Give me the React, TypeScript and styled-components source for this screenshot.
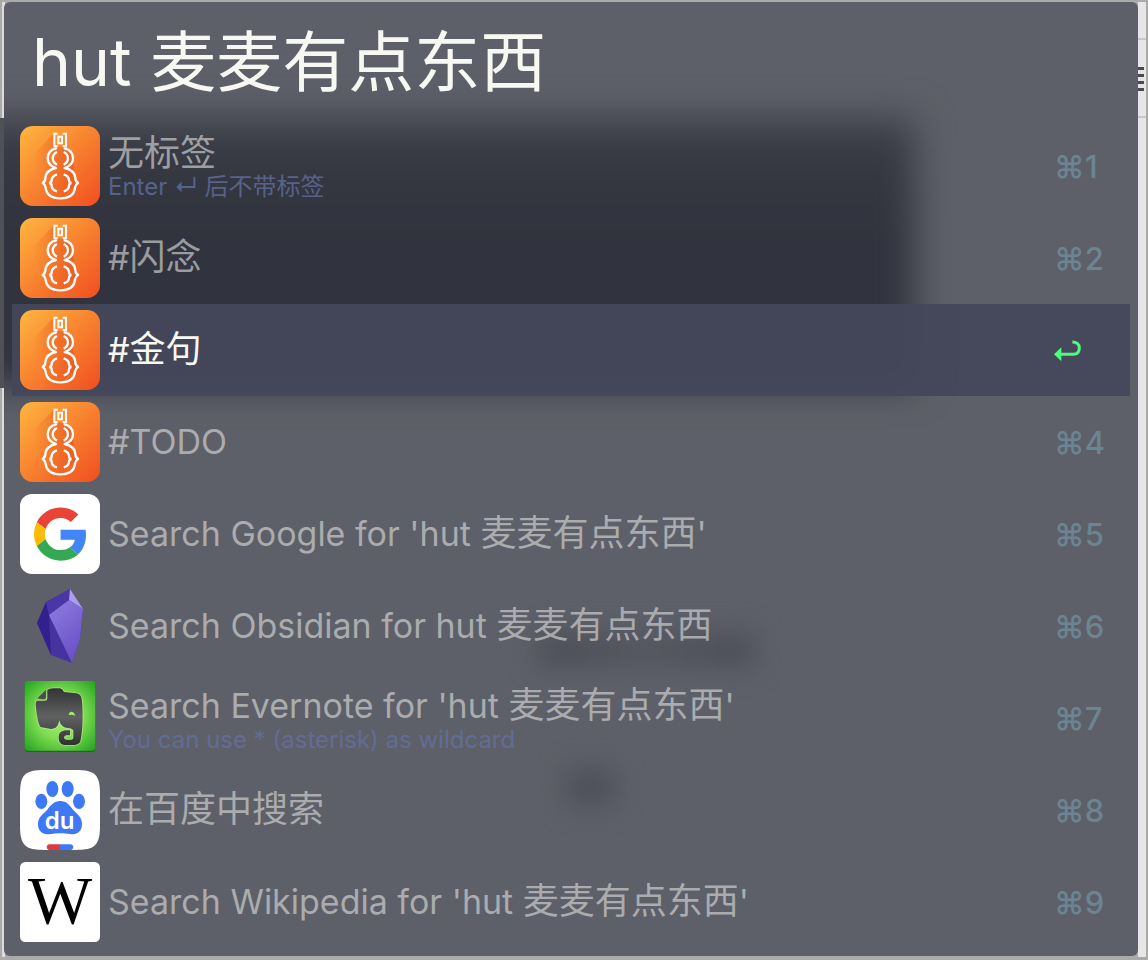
import React, { useId } from 'react';
import styled, { createGlobalStyle } from 'styled-components';

const Global = createGlobalStyle`
  * { box-sizing: border-box; }
  body { margin: 0; background: #a9aaa9; }
`;

const fontStack = `Inter, 'Noto Sans CJK SC', sans-serif`;

const Desktop = styled.main`
  min-height: 100vh;
  padding: 2px 10px 4px 4px;
  font-family: ${fontStack};
  background:
    repeating-linear-gradient(#4a4a4a 0 3px, #e4e4e4 3px 7px) right 4px top 67px / 6px 24px no-repeat,
    linear-gradient(#c8c8c8, #c8c8c8) right 2px top 38px / 8px 2px no-repeat,
    linear-gradient(#c8c8c8, #c8c8c8) right 2px top 116px / 8px 2px no-repeat,
    linear-gradient(#4f5156, #4f5156) left 0 top 118px / 4px 270px no-repeat,
    linear-gradient(#e6e6e6, #e6e6e6) right 2px top 2px / 8px calc(100% - 5px) no-repeat,
    linear-gradient(#dcdcdc, #dcdcdc) left 2px top 2px / 3px calc(100% - 5px) no-repeat,
    #a9aaa9;
`;

const Panel = styled.section`
  position: relative;
  overflow: hidden;
  padding: 0 8px 8px;
  border-radius: 6px;
  background: #5e6069;
`;

const Backdrop = styled.div`
  position: absolute;
  inset: 0;
  pointer-events: none;
`;

const Shade = styled.div<{ $x: number; $y: number; $w: string; $h: number; $blur: number; $color: string }>`
  position: absolute;
  left: ${p => p.$x}px;
  top: ${p => p.$y}px;
  width: ${p => p.$w};
  height: ${p => p.$h}px;
  background: ${p => p.$color};
  filter: blur(${p => p.$blur}px);
`;

const Query = styled.input`
  position: relative;
  display: block;
  width: 100%;
  height: 118px;
  padding: 0 20px 8px;
  border: 0;
  outline: 0;
  background: transparent;
  color: #f8f8f2;
  font-family: ${fontStack};
  font-size: 66px;
`;

const Results = styled.ul`
  position: relative;
  margin: 0;
  padding: 0;
  list-style: none;
`;

const Row = styled.button<{ $active: boolean }>`
  display: flex;
  align-items: center;
  gap: 8px;
  width: 100%;
  height: 92px;
  padding: 0 24px 0 8px;
  border: 0;
  background: ${p => (p.$active ? 'rgba(68, 71, 90, 0.94)' : 'transparent')};
  color: ${p => (p.$active ? '#f8f8f2' : 'rgba(212, 212, 210, 0.66)')};
  font-family: ${fontStack};
  text-align: left;
`;

const Labels = styled.span`
  flex: 1;
  min-width: 0;
  display: flex;
  flex-direction: column;
  padding-bottom: 2px;
`;

const Title = styled.span`
  font-size: 36px;
  line-height: 44px;
  white-space: nowrap;
`;

const Latin = styled.span`
  font-size: 34px;
`;

const Subtitle = styled.span`
  color: rgba(98, 114, 164, 0.75);
  font-size: 24px;
  line-height: 24px;
  white-space: nowrap;
`;

const Shortcut = styled.kbd`
  width: 52px;
  padding-top: 2px;
  color: #6b8592;
  font-family: ${fontStack};
  font-size: 31px;
  font-weight: 500;
  line-height: 40px;
  white-space: nowrap;
`;

const Icon = styled.svg`
  display: block;
  flex: none;
  width: 80px;
  height: 80px;
`;

const ReturnArrow = styled.svg`
  display: block;
  width: 28px;
  height: 22px;
`;

function Gourd() {
  const id = useId();
  return (
    <Icon viewBox="30 30 240 240" aria-hidden="true">
      <defs>
        <linearGradient id={id} x1="0" y1="0" x2="1" y2="1">
          <stop offset="0" stopColor="#ffb640" />
          <stop offset="0.5" stopColor="#f8812f" />
          <stop offset="1" stopColor="#f04e20" />
        </linearGradient>
        <linearGradient id={id + 's'} x1="1" y1="0" x2="0" y2="0.5">
          <stop offset="0" stopColor="#d9481f" stopOpacity="0.7" />
          <stop offset="1" stopColor="#e8551f" stopOpacity="0" />
        </linearGradient>
      </defs>
      <rect x="30" y="30" width="240" height="240" rx="38" fill={`url(#${id})`} />
      <path d="M132 52L75 110V270H130L200 205L185 120L167 92H132Z" fill={`url(#${id}s)`} />
      <g fill="none" stroke="#fff" strokeWidth="7">
        <path d="M143 53H133V91H143M158 53H168V91H158M145 62H156V82H145Z" strokeWidth="6" />
        <path strokeLinecap="round" strokeLinejoin="round" d="M138 97C122 101 113 113 113 127C113 141 122 151 138 156C120 160 107 171 106 186C106 195 103 198 98 201C103 204 106 207 107 215C109 236 125 247 151 247C177 247 193 236 195 215C196 207 199 204 204 201C199 198 196 195 196 186C195 171 182 160 164 156C180 151 189 141 189 127C189 113 180 101 164 97" />
        <path d="M141 108C124 116 124 138 141 146M161 108C178 116 178 138 161 146" />
        <path d="M141 175C128 179 125 187 125 193C125 198 123 200 118 201C123 202 125 204 125 209C125 216 129 223 141 226M161 175C174 179 177 187 177 193C177 198 179 200 184 201C179 202 177 204 177 209C177 216 173 223 161 226" />
      </g>
    </Icon>
  );
}

function Google() {
  return (
    <Icon viewBox="0 0 80 80" aria-hidden="true">
      <rect width="80" height="80" rx="12" fill="#fff" />
      <g transform="translate(14 13.5) scale(1.107)">
        <path fill="#ea4335" d="M24 9.5c3.54 0 6.71 1.22 9.21 3.6l6.85-6.85C35.9 2.38 30.47 0 24 0 14.62 0 6.51 5.38 2.56 13.22l7.98 6.19C12.43 13.72 17.74 9.5 24 9.5z" />
        <path fill="#4285f4" d="M46.98 24.55c0-1.57-.15-3.09-.38-4.55H24v9.02h12.94c-.58 2.96-2.26 5.48-4.78 7.18l7.73 6c4.51-4.18 7.09-10.36 7.09-17.65z" />
        <path fill="#fbbc05" d="M10.53 28.59c-.48-1.45-.76-2.99-.76-4.59s.27-3.14.76-4.59l-7.98-6.19C.92 16.46 0 20.12 0 24c0 3.88.92 7.54 2.56 10.78l7.97-6.19z" />
        <path fill="#34a853" d="M24 48c6.48 0 11.93-2.13 15.89-5.81l-7.73-6c-2.15 1.45-4.92 2.3-8.16 2.3-6.26 0-11.57-4.22-13.47-9.91l-7.98 6.19C6.51 42.62 14.62 48 24 48z" />
      </g>
    </Icon>
  );
}

function Obsidian() {
  const id = useId();
  return (
    <Icon viewBox="0 0 80 80" aria-hidden="true">
      <defs>
        <linearGradient id={id} x1="0" y1="0" x2="0.5" y2="1">
          <stop offset="0" stopColor="#8f7ee0" />
          <stop offset="1" stopColor="#6a52c8" />
        </linearGradient>
      </defs>
      <path fill="#4733a0" d="M50 3L63 25L60 53L56 65L52 77L31 69L17 37L26 16Z" />
      <path fill="#34208c" d="M17 37L26 16L29 29L31 69Z" />
      <path fill="#4a36a4" d="M26 16L50 3L49 14L29 29Z" />
      <path fill="#ac9cf2" d="M50 3L63 23L49 14Z" />
      <path fill={`url(#${id})`} d="M29 29L49 14L63 23L60 53L56 65L52 77Z" />
    </Icon>
  );
}

function Evernote() {
  const id = useId();
  return (
    <Icon viewBox="30 30 240 240" aria-hidden="true">
      <defs>
        <radialGradient id={id} cx="0.5" cy="0.5" r="0.68">
          <stop offset="0" stopColor="#b4f07c" />
          <stop offset="0.5" stopColor="#7ddc50" />
          <stop offset="1" stopColor="#26a522" />
        </radialGradient>
        <linearGradient id={id + 'h'} x1="0" y1="0" x2="0" y2="1">
          <stop offset="0" stopColor="#333534" />
          <stop offset="0.5" stopColor="#606261" />
          <stop offset="1" stopColor="#303231" />
        </linearGradient>
      </defs>
      <rect x="44" y="41" width="212" height="211" rx="9" fill="#1f6b1c" />
      <rect x="44" y="39" width="212" height="209" rx="9" fill={`url(#${id})`} />
      <path
        d="M80 98H105Q112 98 112 91V66Q117 61 130 61H150Q159 63 162 72L200 76Q213 79 215 92C220 125 219 190 211 220Q208 230 194 231H165C149 231 146 218 146 208C146 193 155 187 170 187H180V202H169Q162 203 162 209Q163 215 171 215H183Q190 215 190 207V188Q187 180 173 180C159 179 150 170 148 157C145 174 138 183 123 183L94 178C84 174 78 127 77 107Q77 102 80 98Z"
        fill={`url(#${id}h)`} stroke="#c9f39c" strokeWidth="5" strokeOpacity="0.6" paintOrder="stroke"
      />
      <path d="M80 92L109 63V87Q109 95 101 95Z" fill="#4b4d4c" stroke="#c9f39c" strokeWidth="2" strokeOpacity="0.6" />
      <path d="M176 141Q177 131 185 131Q194 132 195 143Q185 138 176 141Z" fill="#a7e873" />
    </Icon>
  );
}

const LogoText = styled.text<{ $family: string; $size: number; $weight: number }>`
  font-family: ${p => p.$family};
  font-size: ${p => p.$size}px;
  font-weight: ${p => p.$weight};
  text-anchor: middle;
`;

function Baidu() {
  return (
    <Icon viewBox="30 306 240 240" aria-hidden="true">
      <path d="M30 380C30 320 44 306 104 306H196C256 306 270 320 270 380V472C270 532 256 546 196 546H104C44 546 30 532 30 472Z" fill="#fff" />
      <g fill="#3f78f5">
        <ellipse cx="94" cy="400" rx="18" ry="23" />
        <ellipse cx="127" cy="363" rx="18" ry="24" />
        <ellipse cx="173" cy="363" rx="18" ry="24" />
        <ellipse cx="207" cy="400" rx="18" ry="23" />
        <path d="M151 399C170 399 179 412 188 424C200 438 216 446 216 469C216 488 204 499 188 499C173 499 168 496 150 496C132 496 127 499 112 499C96 499 84 488 84 469C84 446 101 438 113 424C122 412 132 399 151 399Z" />
      </g>
      <LogoText x="149" y="482" fill="#fff" $family="Inter, sans-serif" $size={72} $weight={600}>du</LogoText>
      <path d="M150 529V546H116Q110 543 110 537Q111 529 119 529Z" fill="#db3b42" />
      <path d="M150 529V546H184Q190 543 190 537Q189 529 181 529Z" fill="#3f78f5" />
    </Icon>
  );
}

function Wikipedia() {
  return (
    <Icon viewBox="30 36 240 240" aria-hidden="true">
      <rect x="30" y="36" width="240" height="240" rx="16" fill="#fff" />
      <LogoText x="150" y="220" fill="#000" $family="'Liberation Serif', serif" $size={204} $weight={400}>W</LogoText>
    </Icon>
  );
}

/* Latin runs are set slightly smaller so that they balance with the Han characters. */
function MixedText({ text }: { text: string }) {
  return (
    <>
      {text.split(/([\u0020-\u007e]+)/).filter(Boolean).map((run, i) =>
        /^[\u0020-\u007e]/.test(run) ? <Latin key={i}>{run}</Latin> : run,
      )}
    </>
  );
}

type Item = { icon: () => React.JSX.Element; title: string; subtitle?: string; active?: boolean };

const items: Item[] = [
  { icon: Gourd, title: '无标签', subtitle: 'Enter ↵ 后不带标签' },
  { icon: Gourd, title: '#闪念' },
  { icon: Gourd, title: '#金句', active: true },
  { icon: Gourd, title: '#TODO' },
  { icon: Google, title: "Search Google for 'hut 麦麦有点东西'" },
  { icon: Obsidian, title: 'Search Obsidian for hut 麦麦有点东西' },
  { icon: Evernote, title: "Search Evernote for 'hut 麦麦有点东西'", subtitle: 'You can use * (asterisk) as wildcard' },
  { icon: Baidu, title: '在百度中搜索' },
  { icon: Wikipedia, title: "Search Wikipedia for 'hut 麦麦有点东西'" },
];

export default function App() {
  return (
    <Desktop lang="zh-CN">
      <Global />
      <Panel>
        <Backdrop>
          <Shade $x={-40} $y={116} $w="calc(80% + 44px)" $h={268} $blur={18} $color="linear-gradient(#3e404a, #343640 60px, #31333e 120px)" />
          <Shade $x={535} $y={632} $w="215px" $h={32} $blur={14} $color="linear-gradient(90deg, #4a4c55, #54565f 50%, #4a4c55)" />
          <Shade $x={562} $y={768} $w="48px" $h={34} $blur={14} $color="#4c4e57" />
        </Backdrop>
        <Query type="text" aria-label="Search" defaultValue="hut 麦麦有点东西" spellCheck={false} />
        <Results>
          {items.map((item, i) => (
            <li key={item.title}>
              <Row type="button" $active={!!item.active}>
                <item.icon />
                <Labels>
                  <Title><MixedText text={item.title} /></Title>
                  {item.subtitle && <Subtitle>{item.subtitle}</Subtitle>}
                </Labels>
                <Shortcut>
                  {item.active ? (
                    <ReturnArrow viewBox="80 119 84 66" role="img" aria-label="Return">
                      <path d="M80 162L102 141V183Z" fill="#50fa7b" />
                      <path d="M100 162H138C152 162 156 153 156 143C156 131 147 125 135 125" fill="none" stroke="#50fa7b" strokeWidth="9" />
                    </ReturnArrow>
                  ) : (
                    `⌘${i + 1}`
                  )}
                </Shortcut>
              </Row>
            </li>
          ))}
        </Results>
      </Panel>
    </Desktop>
  );
}
